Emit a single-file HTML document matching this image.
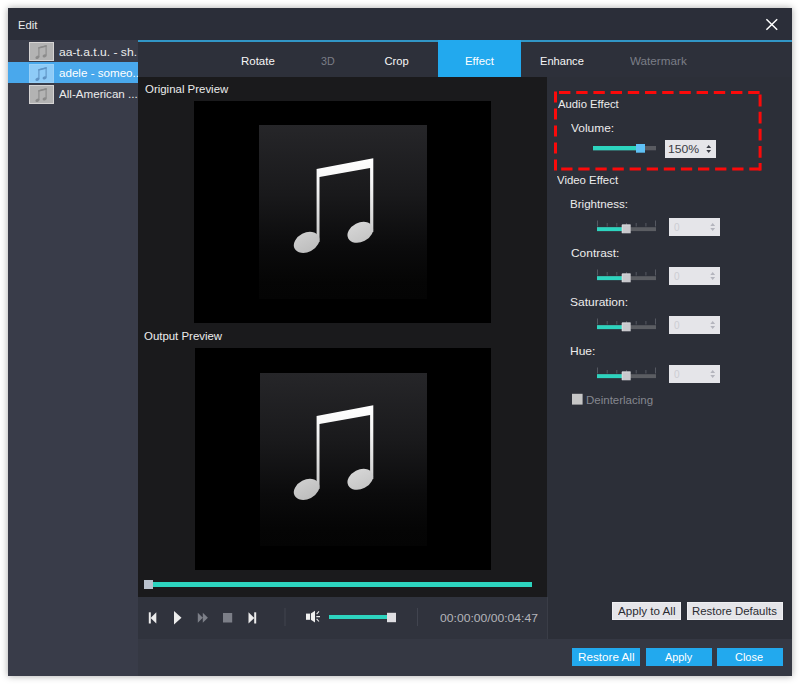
<!DOCTYPE html>
<html><head><meta charset="utf-8">
<style>
html,body{margin:0;padding:0;}
body{width:800px;height:685px;background:#fff;position:relative;overflow:hidden;font-family:"Liberation Sans",sans-serif;font-size:12px;color:#f0f0f0;}
.a{position:absolute;}
.t{position:absolute;white-space:nowrap;line-height:14px;transform-origin:0 0;font-size:11.2px}
#win{left:8px;top:8px;width:784px;height:668px;background:#2b2e39;box-shadow:0 0 7px rgba(0,0,0,.35);}
#side{left:8px;top:40px;width:130px;height:636px;background:#393c49;}
#sel{left:8px;top:62px;width:130px;height:21px;background:#49a8ec;}
.ico{width:23px;height:17px;background:#b1b1b1;border:1px solid #d2cfcf;}
#blue{left:138px;top:40px;width:654px;height:2px;background:#3196c6;}
#tabs{left:138px;top:42px;width:654px;height:35px;background:#2d303a;}
#tabact{left:438px;top:40px;width:83px;height:37px;background:#22a9ee;}
#prev{left:138px;top:77px;width:409px;height:520px;background:#1a1a1c;}
#ctrl{left:138px;top:597px;width:409px;height:41.5px;background:#30333d;}
#right{left:547px;top:77px;width:245px;height:561.5px;background:#2c2f38;}
#bot{left:138px;top:638.5px;width:654px;height:37.5px;background:#353843;}
.vid{background:#000;width:297px;height:222px;}
.sq{width:167.4px;height:173.2px;background:linear-gradient(#262629,#19191b 40%,#0b0b0c 70%,#050505 90%,#040404);}
.btnb{background:#22a9ee;height:18px;line-height:18px;text-align:center;color:#fff;font-size:12px;}
.btnw{background:#e5e5e9;box-shadow:inset 0 0 0 1px #efeff2;height:18px;line-height:18px;text-align:center;color:#222;font-size:12px;}
.spin{width:51px;height:18px;background:#e4e4e8;}
.trk{height:4px;}
</style></head><body>
<div id="win" class="a"></div>
<svg class="a" style="left:765px;top:18px" width="13" height="13" viewBox="0 0 13 13"><path d="M1.4 1.2 L12.2 11.8 M12.2 1.2 L1.4 11.8" stroke="#fff" stroke-width="1.5" fill="none"/></svg>

<div id="side" class="a"></div>
<div id="sel" class="a"></div>
<svg class="a" style="left:29px;top:42px" width="25" height="19" viewBox="0 0 25 19"><rect x="0.5" y="0.5" width="24" height="18" fill="#b3b3b3" stroke="#d6d4d4"/><path d="M9.9 15 L9.9 5.6 L17.1 3.8 L17.1 13.6" fill="none" stroke="#8b8b8b" stroke-width="1.1"/><path d="M9.4 5.2 L17.6 3.2 L17.6 4.8 L9.4 6.8 Z" fill="#8b8b8b"/><ellipse cx="8.4" cy="15.3" rx="2.1" ry="1.5" transform="rotate(-25 8.4 15.3)" fill="#8b8b8b"/><ellipse cx="15.6" cy="13.9" rx="2.1" ry="1.5" transform="rotate(-25 15.6 13.9)" fill="#8b8b8b"/></svg>
<svg class="a" style="left:29px;top:64px" width="25" height="19" viewBox="0 0 25 19"><rect x="0.5" y="0.5" width="24" height="18" fill="#8ecbf7" stroke="#9ad1f8"/><path d="M9.9 15 L9.9 5.6 L17.1 3.8 L17.1 13.6" fill="none" stroke="#5f93c4" stroke-width="1.1"/><path d="M9.4 5.2 L17.6 3.2 L17.6 4.8 L9.4 6.8 Z" fill="#5f93c4"/><ellipse cx="8.4" cy="15.3" rx="2.1" ry="1.5" transform="rotate(-25 8.4 15.3)" fill="#5f93c4"/><ellipse cx="15.6" cy="13.9" rx="2.1" ry="1.5" transform="rotate(-25 15.6 13.9)" fill="#5f93c4"/></svg>
<svg class="a" style="left:29px;top:85px" width="25" height="19" viewBox="0 0 25 19"><rect x="0.5" y="0.5" width="24" height="18" fill="#b3b3b3" stroke="#d6d4d4"/><path d="M9.9 15 L9.9 5.6 L17.1 3.8 L17.1 13.6" fill="none" stroke="#8b8b8b" stroke-width="1.1"/><path d="M9.4 5.2 L17.6 3.2 L17.6 4.8 L9.4 6.8 Z" fill="#8b8b8b"/><ellipse cx="8.4" cy="15.3" rx="2.1" ry="1.5" transform="rotate(-25 8.4 15.3)" fill="#8b8b8b"/><ellipse cx="15.6" cy="13.9" rx="2.1" ry="1.5" transform="rotate(-25 15.6 13.9)" fill="#8b8b8b"/></svg>

<div id="tabs" class="a"></div>
<div id="blue" class="a"></div>
<div id="tabact" class="a"></div>
<div id="prev" class="a"></div>
<div id="ctrl" class="a"></div>
<div id="right" class="a"></div>
<div id="bot" class="a"></div>
<div class="a" style="left:546.6px;top:597px;width:1px;height:41.5px;background:#3a3d47"></div>


<div class="a vid" style="left:194.3px;top:101px;width:296.7px;height:222.4px"></div>
<div class="a sq" style="left:259.2px;top:125.4px"></div>
<div class="a vid" style="left:195.3px;top:347.7px;width:295.7px;height:222px"></div>
<div class="a sq" style="left:259.6px;top:372.6px"></div>

<svg class="a" style="left:260px;top:126px" width="167" height="172" viewBox="0 0 167 172"><defs><linearGradient id="ng1" x1="0" y1="32" x2="0" y2="128" gradientUnits="userSpaceOnUse"><stop offset="0" stop-color="#ffffff"/><stop offset="0.25" stop-color="#f6f6f6"/><stop offset="1" stop-color="#bcbcbc"/></linearGradient></defs>
<g fill="url(#ng1)"><path d="M56.6 42.9 L113.3 32.3 L113.3 106 L110.1 106 L110.1 42 L59.5 51 L59.5 116 L56.6 116 Z"/>
<ellipse cx="46.6" cy="116.4" rx="13.5" ry="9.6" transform="rotate(-27 46.6 116.4)"/>
<ellipse cx="100.3" cy="106.3" rx="13.5" ry="9.6" transform="rotate(-27 100.3 106.3)"/></g></svg>
<svg class="a" style="left:260.4px;top:373px" width="167" height="172" viewBox="0 0 167 172"><defs><linearGradient id="ng2" x1="0" y1="32" x2="0" y2="128" gradientUnits="userSpaceOnUse"><stop offset="0" stop-color="#ffffff"/><stop offset="0.25" stop-color="#f6f6f6"/><stop offset="1" stop-color="#bcbcbc"/></linearGradient></defs>
<g fill="url(#ng2)"><path d="M56.6 42.9 L113.3 32.3 L113.3 106 L110.1 106 L110.1 42 L59.5 51 L59.5 116 L56.6 116 Z"/>
<ellipse cx="46.6" cy="116.4" rx="13.5" ry="9.6" transform="rotate(-27 46.6 116.4)"/>
<ellipse cx="100.3" cy="106.3" rx="13.5" ry="9.6" transform="rotate(-27 100.3 106.3)"/></g></svg>
<div class="a" style="left:144px;top:582px;width:388px;height:5px;background:#2dd4bf"></div>
<div class="a" style="left:144px;top:580px;width:9px;height:9px;background:#b9c1cd"></div>


<svg class="a" style="left:138px;top:597px" width="409" height="41" viewBox="138 597 409 41">
<g fill="#ececec">
<rect x="148.8" y="612.3" width="2" height="11.2"/><path d="M156.3 612.3 L156.3 623.5 L150.6 617.9 Z"/>
<path d="M174 611 L181.5 617.7 L174 624.4 Z"/>
<path d="M248.5 612.3 L254.3 617.9 L248.5 623.5 Z"/><rect x="254.2" y="612.3" width="2" height="11.2"/>
</g>
<g fill="#7c7f88">
<path d="M197.8 612.8 L202.8 617.75 L197.8 622.7 Z M202.8 612.8 L207.9 617.75 L202.8 622.7 Z"/>
<rect x="223" y="613" width="9.2" height="9.5"/>
</g>
<rect x="284.5" y="608" width="1" height="18" fill="#41444f"/>
<rect x="417" y="608" width="1" height="18" fill="#41444f"/>
<g fill="#f0f0f0"><rect x="306" y="613.6" width="4" height="6.2"/><path d="M310.9 613.6 L315 610.8 L315 622.6 L310.9 619.8 Z"/></g>
<g stroke="#e8e8e8" stroke-width="1.1" fill="none"><path d="M316.6 614.2 L319 611.4 M316.3 616.6 L320 616.6 M316.6 618.9 L319 621.5"/></g>
<rect x="329" y="615" width="59" height="4" fill="#2dd4bf"/>
<rect x="387" y="612.8" width="9" height="9.4" fill="#dedee2"/>
</svg>
<svg class="a" style="left:547px;top:77px" width="245" height="561" viewBox="547 77 245 561"><g stroke="#fb0a0a" stroke-width="3" fill="none"><path d="M559 92.6 H761.6" stroke-dasharray="11.4 5.8"/><path d="M760.1 94.6 V170.4" stroke-dasharray="11.8 5.3"/><path d="M561.2 168.9 H761.6" stroke-dasharray="11.3 5.8"/><path d="M555.5 91.6 V170.4" stroke-dasharray="11 6"/></g><rect x="593" y="146" width="63" height="4.3" fill="#595b61"/><rect x="593" y="146" width="44" height="4.3" fill="#2dd4bf"/><rect x="636" y="144" width="9" height="8.7" fill="#5fc1f6"/><rect x="665" y="140" width="51" height="18" fill="#e5e5e9"/><path d="M706.3000000000001 148.1 L708.7 145.1 L711.1 148.1 Z M706.3000000000001 150.0 L708.7 153.0 L711.1 150.0 Z" fill="#3a3c44"/><rect x="597.0" y="220.5" width="1" height="6.0" fill="#555861"/><rect x="606.7" y="223" width="1" height="3.5" fill="#555861"/><rect x="616.3" y="223" width="1" height="3.5" fill="#555861"/><rect x="626.0" y="223" width="1" height="3.5" fill="#555861"/><rect x="635.7" y="223" width="1" height="3.5" fill="#555861"/><rect x="645.4" y="223" width="1" height="3.5" fill="#555861"/><rect x="655.0" y="220.5" width="1" height="6.0" fill="#555861"/><rect x="597" y="227.2" width="59" height="3.9" fill="#5b5d62"/><rect x="597" y="227.2" width="26" height="3.9" fill="#2dd4bf"/><rect x="621.9" y="224.6" width="8.8" height="8.7" fill="#c9c9cd"/><path d="M622.2 233 V224.9 H630.4" stroke="#e2e2e6" stroke-width="0.7" fill="none"/><rect x="669" y="218" width="51" height="18" fill="#e5e5e9"/><path d="M710.3000000000001 226.1 L712.7 223.1 L715.1 226.1 Z M710.3000000000001 228.0 L712.7 231.0 L715.1 228.0 Z" fill="#b4b5bd"/><rect x="597.0" y="269.5" width="1" height="6.0" fill="#555861"/><rect x="606.7" y="272" width="1" height="3.5" fill="#555861"/><rect x="616.3" y="272" width="1" height="3.5" fill="#555861"/><rect x="626.0" y="272" width="1" height="3.5" fill="#555861"/><rect x="635.7" y="272" width="1" height="3.5" fill="#555861"/><rect x="645.4" y="272" width="1" height="3.5" fill="#555861"/><rect x="655.0" y="269.5" width="1" height="6.0" fill="#555861"/><rect x="597" y="276.2" width="59" height="3.9" fill="#5b5d62"/><rect x="597" y="276.2" width="26" height="3.9" fill="#2dd4bf"/><rect x="621.9" y="273.6" width="8.8" height="8.7" fill="#c9c9cd"/><path d="M622.2 282 V273.9 H630.4" stroke="#e2e2e6" stroke-width="0.7" fill="none"/><rect x="669" y="267" width="51" height="18" fill="#e5e5e9"/><path d="M710.3000000000001 275.1 L712.7 272.1 L715.1 275.1 Z M710.3000000000001 277.0 L712.7 280.0 L715.1 277.0 Z" fill="#b4b5bd"/><rect x="597.0" y="318.5" width="1" height="6.0" fill="#555861"/><rect x="606.7" y="321" width="1" height="3.5" fill="#555861"/><rect x="616.3" y="321" width="1" height="3.5" fill="#555861"/><rect x="626.0" y="321" width="1" height="3.5" fill="#555861"/><rect x="635.7" y="321" width="1" height="3.5" fill="#555861"/><rect x="645.4" y="321" width="1" height="3.5" fill="#555861"/><rect x="655.0" y="318.5" width="1" height="6.0" fill="#555861"/><rect x="597" y="325.2" width="59" height="3.9" fill="#5b5d62"/><rect x="597" y="325.2" width="26" height="3.9" fill="#2dd4bf"/><rect x="621.9" y="322.6" width="8.8" height="8.7" fill="#c9c9cd"/><path d="M622.2 331 V322.9 H630.4" stroke="#e2e2e6" stroke-width="0.7" fill="none"/><rect x="669" y="316" width="51" height="18" fill="#e5e5e9"/><path d="M710.3000000000001 324.1 L712.7 321.1 L715.1 324.1 Z M710.3000000000001 326.0 L712.7 329.0 L715.1 326.0 Z" fill="#b4b5bd"/><rect x="597.0" y="367.5" width="1" height="6.0" fill="#555861"/><rect x="606.7" y="370" width="1" height="3.5" fill="#555861"/><rect x="616.3" y="370" width="1" height="3.5" fill="#555861"/><rect x="626.0" y="370" width="1" height="3.5" fill="#555861"/><rect x="635.7" y="370" width="1" height="3.5" fill="#555861"/><rect x="645.4" y="370" width="1" height="3.5" fill="#555861"/><rect x="655.0" y="367.5" width="1" height="6.0" fill="#555861"/><rect x="597" y="374.2" width="59" height="3.9" fill="#5b5d62"/><rect x="597" y="374.2" width="26" height="3.9" fill="#2dd4bf"/><rect x="621.9" y="371.6" width="8.8" height="8.7" fill="#c9c9cd"/><path d="M622.2 380 V371.9 H630.4" stroke="#e2e2e6" stroke-width="0.7" fill="none"/><rect x="669" y="365" width="51" height="18" fill="#e5e5e9"/><path d="M710.3000000000001 373.1 L712.7 370.1 L715.1 373.1 Z M710.3000000000001 375.0 L712.7 378.0 L715.1 375.0 Z" fill="#b4b5bd"/><rect x="572" y="393.8" width="10.6" height="10.8" fill="#c6c6c6"/></svg>

<div class="a btnw" style="left:611.8px;top:602px;width:69.2px"></div>
<div class="a btnw" style="left:686.5px;top:602px;width:96.5px"></div>
<div class="a btnb" style="left:572.3px;top:648px;width:68px"></div>
<div class="a btnb" style="left:645.6px;top:648px;width:66px"></div>
<div class="a btnb" style="left:716.9px;top:648px;width:66.1px"></div>
<div class="t" style="left:17.71px;top:18.12px;color:#ececec;transform:scaleX(1.0032)">Edit</div>
<div class="t" style="left:241.09px;top:53.52px;color:#f6f6f6;transform:scaleX(1.0250)">Rotate</div>
<div class="t" style="left:320.52px;top:53.52px;color:#7b7e87;transform:scaleX(0.9546)">3D</div>
<div class="t" style="left:384.50px;top:53.52px;color:#f6f6f6;transform:scaleX(1.0000)">Crop</div>
<div class="t" style="left:464.94px;top:53.52px;color:#ffffff;transform:scaleX(1.0210)">Effect</div>
<div class="t" style="left:540.33px;top:53.52px;color:#f6f6f6;transform:scaleX(0.9922)">Enhance</div>
<div class="t" style="left:630.17px;top:53.52px;color:#7b7e87;transform:scaleX(1.0451)">Watermark</div>
<div class="t" style="left:144.78px;top:81.92px;color:#ececec;transform:scaleX(1.0225)">Original Preview</div>
<div class="t" style="left:144.32px;top:328.92px;color:#ececec;transform:scaleX(1.0212)">Output Preview</div>
<div class="t" style="left:439.81px;top:611.12px;color:#b4b5bb;transform:scaleX(1.0860)">00:00:00/00:04:47</div>
<div class="t" style="left:557.83px;top:97.12px;color:#ececec;transform:scaleX(1.0107)">Audio Effect</div>
<div class="t" style="left:570.94px;top:120.92px;color:#ececec;transform:scaleX(1.0662)">Volume:</div>
<div class="t" style="left:668.34px;top:142.12px;color:#3a3c44;transform:scaleX(1.0896)">150%</div>
<div class="t" style="left:557.44px;top:173.32px;color:#ececec;transform:scaleX(1.0191)">Video Effect</div>
<div class="t" style="left:569.62px;top:197.12px;color:#ececec;transform:scaleX(1.0357)">Brightness:</div>
<div class="t" style="left:570.74px;top:245.92px;color:#ececec;transform:scaleX(1.0665)">Contrast:</div>
<div class="t" style="left:569.57px;top:295.32px;color:#ececec;transform:scaleX(1.0730)">Saturation:</div>
<div class="t" style="left:570.49px;top:344.12px;color:#ececec;transform:scaleX(1.0747)">Hue:</div>
<div class="t" style="left:586.43px;top:392.92px;color:#85878f;transform:scaleX(1.0268)">Deinterlacing</div>
<div class="t" style="left:673.61px;top:220.12px;color:#cccdd3;transform:scaleX(0.8993)">0</div>
<div class="t" style="left:673.61px;top:269.12px;color:#cccdd3;transform:scaleX(0.8993)">0</div>
<div class="t" style="left:673.61px;top:318.12px;color:#cccdd3;transform:scaleX(0.8993)">0</div>
<div class="t" style="left:673.61px;top:367.12px;color:#cccdd3;transform:scaleX(0.8993)">0</div>
<div class="t" style="left:618.24px;top:604.12px;color:#2a2b31;transform:scaleX(1.0381)">Apply to All</div>
<div class="t" style="left:692.23px;top:604.12px;color:#2a2b31;transform:scaleX(1.0180)">Restore Defaults</div>
<div class="t" style="left:578.18px;top:650.42px;color:#ffffff;transform:scaleX(1.0440)">Restore All</div>
<div class="t" style="left:665.05px;top:650.42px;color:#ffffff;transform:scaleX(0.9705)">Apply</div>
<div class="t" style="left:735.14px;top:650.42px;color:#ffffff;transform:scaleX(0.9798)">Close</div>
<div class="a" style="left:0;top:0;width:138px;height:685px;overflow:hidden"><div class="t" style="left:59.45px;top:45.12px;color:#ececec;transform:scaleX(1.0813)">aa-t.a.t.u. - sh.</div>
<div class="t" style="left:59.21px;top:66.12px;color:#ffffff;transform:scaleX(1.0376)">adele - someo..</div>
<div class="t" style="left:59.45px;top:87.37px;color:#ececec;transform:scaleX(1.0375)">All-American ...</div>
</div>

</body></html>
